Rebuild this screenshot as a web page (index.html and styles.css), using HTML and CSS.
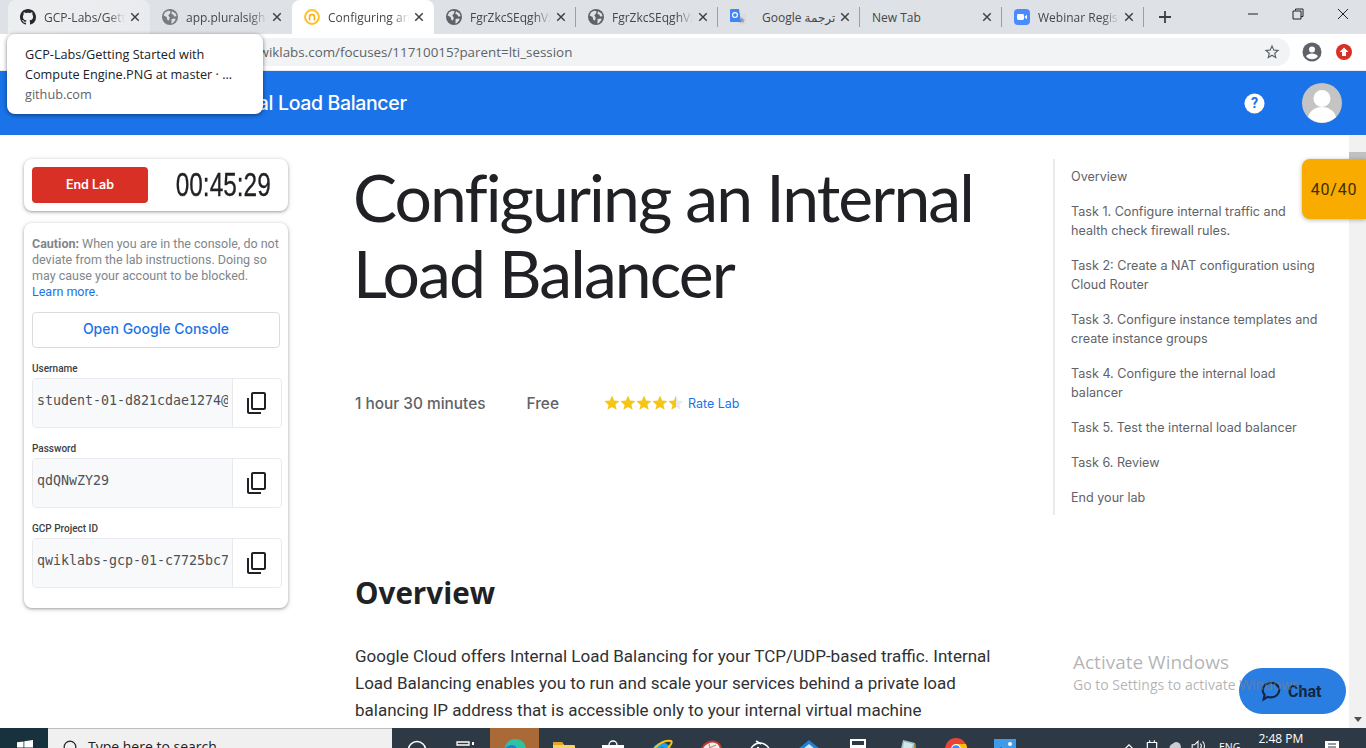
FILE: index.html
```html
<!DOCTYPE html>
<html lang="en">
<head>
<meta charset="utf-8">
<title>Configuring an Internal Load Balancer</title>
<link rel="stylesheet" href="styles.css">
</head>
<body>
<svg class="defs" width="0" height="0" aria-hidden="true">
  <defs>
    <symbol id="i-close" viewBox="0 0 12 12"><path d="M1.5 1.5l9 9M10.5 1.5l-9 9" fill="none" stroke="currentColor" stroke-width="1.7"/></symbol>
    <symbol id="i-globe" viewBox="0 0 16 16"><circle cx="8" cy="8" r="8" fill="#5f6368"/><path d="M3 3.500l3-1.800 2.600.6L8 4.400 6.200 6.600 7.800 8.600 7 11.400 5.400 11 4.600 8 1.600 6.600zM10 2.200l3.600 2.400 1 2.600-2.400.4-1-2-1.800-.6zM9.600 10l3.400-.6.6 1.400-2.600 3.200-1.600.4z" fill="#dee1e6"/></symbol>
    <symbol id="i-copy" viewBox="0 0 24 24"><path transform="matrix(1 0 0 -1 0 24)" d="M16 1H4c-1.100 0-2 .9-2 2v14h2V3h12V1zm3 4H8c-1.100 0-2 .9-2 2v14c0 1.100.9 2 2 2h11c1.100 0 2-.9 2-2V7c0-1.100-.9-2-2-2zm0 16H8V7h11v14z" fill="#202124"/></symbol>
    <symbol id="i-star" viewBox="0 0 24 24"><path d="M12 17.270L18.180 21l-1.640-7.030L22 9.240l-7.190-.61L12 2 9.190 8.630 2 9.240l5.460 5.730L5.820 21z"/></symbol>
    <linearGradient id="half-star"><stop offset="50%" stop-color="#f5c518"/><stop offset="50%" stop-color="#e8eaed"/></linearGradient>
  </defs>
</svg>

<div class="tabstrip">
  <div class="tab tab-hover">
    <svg class="favicon" viewBox="0 0 16 16"><path fill="#24292e" d="M8 0C3.58 0 0 3.58 0 8c0 3.54 2.29 6.53 5.47 7.59.4.07.55-.17.55-.38 0-.19-.01-.82-.01-1.49-2.01.37-2.53-.49-2.69-.94-.09-.23-.48-.94-.82-1.13-.28-.15-.68-.52-.01-.53.63-.01 1.08.58 1.23.82.72 1.21 1.87.87 2.33.66.07-.52.28-.87.51-1.07-1.78-.2-3.64-.89-3.64-3.95 0-.87.31-1.59.82-2.15-.08-.2-.36-1.02.08-2.12 0 0 .67-.21 2.2.82.64-.18 1.32-.27 2-.27.68 0 1.36.09 2 .27 1.53-1.04 2.2-.82 2.2-.82.44 1.1.16 1.92.08 2.12.51.56.82 1.27.82 2.15 0 3.07-1.87 3.75-3.65 3.95.29.25.54.73.54 1.48 0 1.07-.01 1.93-.01 2.2 0 .21.15.46.55.38A8.013 8.013 0 0016 8c0-4.42-3.58-8-8-8z"/></svg>
    <span class="tab-title">GCP-Labs/Getting Started</span>
    <svg class="tab-close"><use href="#i-close"/></svg>
  </div>
  <div class="tab">
    <svg class="favicon favicon-soft"><use href="#i-globe"/></svg>
    <span class="tab-title">app.pluralsight.com</span>
    <svg class="tab-close"><use href="#i-close"/></svg>
  </div>
  <div class="tab tab-active">
    <svg class="favicon" viewBox="0 0 16 16"><circle cx="8" cy="8" r="6.900" fill="none" stroke="#fbc02d" stroke-width="2"/><path d="M4.800 8a3.200 3.200 0 1 1 6.400 0v3.500H9.700V8a1.700 1.700 0 0 0-3.400 0v3.500H4.800z" fill="#f9ab00"/></svg>
    <span class="tab-title">Configuring an Internal</span>
    <svg class="tab-close"><use href="#i-close"/></svg>
  </div>
  <div class="tab tab-sep">
    <svg class="favicon"><use href="#i-globe"/></svg>
    <span class="tab-title">FgrZkcSEqghVxyz</span>
    <svg class="tab-close"><use href="#i-close"/></svg>
  </div>
  <div class="tab tab-sep">
    <svg class="favicon"><use href="#i-globe"/></svg>
    <span class="tab-title">FgrZkcSEqghVxyz</span>
    <svg class="tab-close"><use href="#i-close"/></svg>
  </div>
  <div class="tab tab-sep">
    <svg class="favicon" viewBox="0 0 16 16"><path d="M8 5h8v11H8z" fill="#dadce0"/><path d="M12 8l1 2.200 2 .2-1.500 1.500.4 2.100-1.900-1-1.900 1 .4-2.100L9 10.400l2-.2z" fill="#9aa0a6"/><path d="M1 0h8l2 13H1a1 1 0 0 1-1-1V1a1 1 0 0 1 1-1z" fill="#4285f4"/><circle cx="5" cy="6" r="2.400" fill="none" stroke="#fff" stroke-width="1.200"/></svg>
    <span class="tab-title tab-title-translate">Google ترجمة</span>
    <svg class="tab-close"><use href="#i-close"/></svg>
  </div>
  <div class="tab tab-sep">
    <span class="tab-title tab-title-plain">New Tab</span>
    <svg class="tab-close"><use href="#i-close"/></svg>
  </div>
  <div class="tab tab-sep">
    <svg class="favicon" viewBox="0 0 16 16"><rect width="16" height="16" rx="4" fill="#4a8cff"/><rect x="3" y="5" width="7" height="6" rx="1.400" fill="#fff"/><path d="M10.800 7.400L13 5.700v4.600l-2.200-1.700z" fill="#fff"/></svg>
    <span class="tab-title">Webinar Registration</span>
    <svg class="tab-close"><use href="#i-close"/></svg>
  </div>
  <svg class="newtab" viewBox="0 0 12 12"><path d="M6 0v12M0 6h12" fill="none" stroke="#3c4043" stroke-width="1.800"/></svg>
  <div class="winctrls">
    <svg class="winbtn" viewBox="0 0 12 12"><path d="M1 6h10" stroke="#202124" fill="none"/></svg>
    <svg class="winbtn" viewBox="0 0 12 12"><path d="M3.500 2.500V1h7.500v7.500H9M1 3h8v8H1z" stroke="#202124" fill="none"/></svg>
    <svg class="winbtn" viewBox="0 0 12 12"><path d="M1 1l10 10M11 1L1 11" stroke="#202124" fill="none"/></svg>
  </div>
</div>

<div class="toolbar">
  <div class="omnibox">
    <span class="url">https://www.qwiklabs.com/focuses/11710015?parent=lti_session</span>
    <svg class="omni-star" viewBox="0 0 24 24"><path d="M22 9.240l-7.190-.62L12 2 9.190 8.630 2 9.240l5.460 4.730L5.820 21 12 17.270 18.180 21l-1.630-7.030L22 9.240zM12 15.400l-3.760 2.270 1-4.280-3.320-2.880 4.380-.38L12 6.100l1.710 4.040 4.380.38-3.320 2.880 1 4.280L12 15.400z" fill="#5f6368"/></svg>
  </div>
  <svg class="tool-profile" viewBox="0 0 20 20"><circle cx="10" cy="10" r="9.500" fill="#5f6368"/><circle cx="10" cy="7.500" r="3" fill="#fff"/><path d="M4 14.300c1.200-2 3.600-2.800 6-2.800s4.800.8 6 2.800A7.500 7.500 0 0 1 4 14.300z" fill="#fff"/></svg>
  <svg class="tool-update" viewBox="0 0 16 16"><circle cx="8" cy="8" r="8" fill="#d93025"/><path d="M8 3.500L12.500 8H10v4H6V8H3.500z" fill="#fff"/></svg>
</div>

<header class="appbar">
  <div class="appbar-title">Configuring an Internal Load Balancer</div>
  <svg class="appbar-help" viewBox="0 0 22 22"><circle cx="11" cy="11" r="10.500" fill="#fff"/><text x="11" y="16" text-anchor="middle" class="help-mark">?</text></svg>
  <svg class="appbar-avatar" viewBox="0 0 40 40"><circle cx="20" cy="20" r="20" fill="#c4c4c4"/><circle cx="20" cy="15.500" r="8.500" fill="#fff"/><path d="M6 34c2-7 8-10 14-10s12 3 14 10a20 20 0 0 1-28 0z" fill="#fff"/></svg>
</header>

<div class="viewport">
  <div class="page">
    <main class="layout">
      <aside class="sidebar">
        <section class="card card-timer">
          <button class="end-lab">End Lab</button>
          <div class="timer-box"><span class="timer">00:45:29</span></div>
        </section>
        <section class="card card-creds">
          <p class="caution"><strong>Caution:</strong> When you are in the console, do not deviate from the lab instructions. Doing so may cause your account to be blocked. <a class="learn">Learn more.</a></p>
          <button class="open-console">Open Google Console</button>
          <div class="cred-label">Username</div>
          <div class="field"><div class="field-value"><div class="field-text">student-01-d821cdae1274@qwiklabs.net</div></div><div class="field-copy"><svg class="copy-icon"><use href="#i-copy"/></svg></div></div>
          <div class="cred-label">Password</div>
          <div class="field"><div class="field-value"><div class="field-text">qdQNwZY29</div></div><div class="field-copy"><svg class="copy-icon"><use href="#i-copy"/></svg></div></div>
          <div class="cred-label">GCP Project ID</div>
          <div class="field"><div class="field-value"><div class="field-text">qwiklabs-gcp-01-c7725bc7b4a1</div></div><div class="field-copy"><svg class="copy-icon"><use href="#i-copy"/></svg></div></div>
        </section>
      </aside>

      <article class="content">
        <h1 class="headline">Configuring an Internal Load Balancer</h1>
        <div class="meta">
          <span class="meta-item">1 hour 30 minutes</span>
          <span class="meta-item meta-free">Free</span>
          <span class="stars">
            <svg class="star"><use href="#i-star"/></svg>
            <svg class="star"><use href="#i-star"/></svg>
            <svg class="star"><use href="#i-star"/></svg>
            <svg class="star"><use href="#i-star"/></svg>
            <svg class="star star-half"><use href="#i-star"/></svg>
          </span>
          <a class="rate">Rate Lab</a>
        </div>
        <h2 class="section-title">Overview</h2>
        <p class="body-text">Google Cloud offers Internal Load Balancing for your TCP/UDP-based traffic. Internal Load Balancing enables you to run and scale your services behind a private load balancing IP address that is accessible only to your internal virtual machine instances.</p>
      </article>

      <nav class="toc">
        <a class="toc-item">Overview</a>
        <a class="toc-item">Task 1. Configure internal traffic and health check firewall rules.</a>
        <a class="toc-item">Task 2: Create a NAT configuration using Cloud Router</a>
        <a class="toc-item">Task 3. Configure instance templates and create instance groups</a>
        <a class="toc-item">Task 4. Configure the internal load balancer</a>
        <a class="toc-item">Task 5. Test the internal load balancer</a>
        <a class="toc-item">Task 6. Review</a>
        <a class="toc-item">End your lab</a>
      </nav>
    </main>
  </div>
  <div class="scrollbar">
    <div class="sb-arrow sb-up"></div>
    <div class="sb-thumb"></div>
    <div class="sb-track"></div>
    <div class="sb-arrow sb-down"></div>
  </div>
</div>

<div class="taskbar">
  <div class="start"><svg class="win-logo" viewBox="0 0 16 16"><path d="M0 2.300l6.500-.9v6.200H0zM7.300 1.300L16 0v7.600H7.300zM0 8.400h6.500v6.200L0 13.700zM7.300 8.400H16V16l-8.700-1.300z" fill="#fff"/></svg></div>
  <div class="searchbox">
    <svg class="search-ring" viewBox="0 0 14 14"><circle cx="7" cy="7" r="5.800" fill="none" stroke="#222" stroke-width="1.200"/></svg>
    <span class="search-text">Type here to search</span>
  </div>
  <div class="task-icons">
    <div class="task"><svg class="task-svg" viewBox="0 0 24 24"><circle cx="12" cy="12" r="8.500" fill="none" stroke="#fff" stroke-width="1.600"/></svg></div>
    <div class="task"><svg class="task-svg" viewBox="0 0 24 24"><path d="M3 4h12v3H3zM3 12h12v8H3z" fill="none" stroke="#fff" stroke-width="1.300"/><path d="M18 4h2v3h-2zM18 12h2v3h-2z" fill="#fff"/></svg></div>
    <div class="task task-open"><svg class="task-svg" viewBox="0 0 24 24"><path d="M1 14C1 6 6 1 12.500 1 19 1 23 6 23 11c0 3-2 4.500-5 4.500-2 0-3.500-.8-3.500-1.500C14 9 8 8 5 11c-2 2-2.500 5-1 8z" fill="#2fc2a2"/><path d="M1 14c0-4 4-7 8-7 3 0 5.500 2.500 5.500 6-1-2-3-3-5-2.500-4 1-5 5-4 9-2-1-4.500-2.500-4.500-5.500z" fill="#1e7fd6"/></svg></div>
    <div class="task"><svg class="task-svg" viewBox="0 0 24 24"><path d="M1 5a1 1 0 0 1 1-1h8l2 3h10a1 1 0 0 1 1 1v13H1z" fill="#f6d365"/><path d="M1 5a1 1 0 0 1 1-1h8l2 3H1z" fill="#e0a526"/></svg></div>
    <div class="task"><svg class="task-svg" viewBox="0 0 24 24"><path d="M8 7a4 4 0 0 1 8 0" fill="none" stroke="#fff" stroke-width="1.400"/><path d="M1 7h22v17H1z" fill="#fff"/><path d="M7 10h4.500v4.500H7z" fill="#f25022"/><path d="M12.500 10H17v4.500h-4.500z" fill="#7fba00"/></svg></div>
    <div class="task"><svg class="task-svg" viewBox="0 0 24 24"><circle cx="12" cy="14" r="9.500" fill="#1ea1e8"/><circle cx="12" cy="14" r="4.500" fill="#2d3a45"/><path d="M3 12C9 5 16 2 21 3c2 1-1 5-3 7" fill="none" stroke="#f5c518" stroke-width="2"/></svg></div>
    <div class="task"><svg class="task-svg" viewBox="0 0 24 24"><ellipse cx="12" cy="12" rx="11" ry="9" transform="rotate(-25 12 12)" fill="#c0392b"/><ellipse cx="12" cy="12" rx="9" ry="7" transform="rotate(-25 12 12)" fill="#f1f1f1"/><path d="M6 12l11-5M10 6l3 11" stroke="#c88" stroke-width="1.200"/></svg></div>
    <div class="task"><svg class="task-svg" viewBox="0 0 24 24"><path d="M2 14a10 10 0 0 1 20 0" fill="none" stroke="#fff" stroke-width="1.500" transform="translate(0 1)"/><path d="M8 3l5 3" stroke="#fff" stroke-width="1.500"/><circle cx="10" cy="10" r="1.200" fill="#fff"/><circle cx="15" cy="12" r="1.200" fill="#fff"/></svg></div>
    <div class="task"><svg class="task-svg" viewBox="0 0 24 24"><path d="M1 11L12 2l11 9v13H1z" fill="#1f7fd4"/><path d="M1 11l11 8 11-8v2L12 21 1 13z" fill="#fff"/><path d="M6 11l6-5 6 5-6 4z" fill="#cfe8fb"/></svg></div>
    <div class="task"><svg class="task-svg" viewBox="0 0 24 24"><path d="M4 1h16v23H4z" fill="#fff"/><path d="M6 3h12v4H6z" fill="#2d3a45"/><path d="M7 10h2v3H7zM11 10h2v3h-2zM15 10h2v3h-2z" fill="#2d3a45"/></svg></div>
    <div class="task"><svg class="task-svg" viewBox="0 0 24 24"><path d="M8 2l12 3-4 19H3z" fill="#9fc5c9"/><path d="M9 4l9 2-2 6-8-1z" fill="#d5e6e8"/><path d="M20 5l1 3-3 16h-2z" fill="#c28a2a"/></svg></div>
    <div class="task"><svg class="task-chrome" viewBox="0 0 24 24"><circle cx="12" cy="12" r="11" fill="#ea4335"/><path d="M12 12L2 18A11 11 0 0 0 12 23z" fill="#34a853"/><path d="M12 7h10a11 11 0 0 1-10 16z" fill="#fbbc05"/><circle cx="12" cy="12" r="5" fill="#fff"/><circle cx="12" cy="12" r="3.800" fill="#4285f4"/></svg></div>
    <div class="task"><svg class="task-svg" viewBox="0 0 24 24"><rect x="1" y="1" width="22" height="23" fill="#3d9be9"/><path d="M1 15l7-6 8 7v8H1z" fill="#0e5aa7"/><circle cx="17" cy="6" r="2" fill="#fff"/></svg></div>
  </div>
  <div class="tray">
    <svg class="tray-icon" viewBox="0 0 12 12"><path d="M2 9l4-4 4 4" fill="none" stroke="#fff"/></svg>
    <svg class="tray-icon" viewBox="0 0 12 12"><path d="M2 3h8v7H2zM4 1v2M8 1v2" fill="none" stroke="#fff"/></svg>
    <svg class="tray-icon" viewBox="0 0 12 12"><path d="M2 10a4 4 0 0 1 2-6 4 4 0 0 1 7 2v4z" fill="#c9cdd1"/></svg>
    <svg class="tray-icon" viewBox="0 0 12 12"><path d="M1 5h2l3-3v10L3 9H1zM8 4a3 3 0 0 1 0 4M10 2a6 6 0 0 1 0 8" fill="none" stroke="#fff" stroke-width=".9"/></svg>
    <span class="tray-lang">ENG</span>
    <span class="tray-clock">2:48 PM</span>
    <svg class="tray-note" viewBox="0 0 16 16"><path d="M1 1h14v11H1z" fill="#fff"/><path d="M4 4h8M4 7h8" stroke="#2d3a45"/></svg>
  </div>
</div>

<div class="tooltip">
  <div class="tooltip-title">GCP-Labs/Getting Started with<br>Compute Engine.PNG at master · ...</div>
  <div class="tooltip-host">github.com</div>
</div>

<div class="score">40/40</div>

<div class="chat">
  <svg class="chat-icon" viewBox="0 0 24 24"><path d="M12 3c5 0 9 3.500 9 8s-4 8-9 8c-1.300 0-2.500-.2-3.600-.6L4 21l1-4.600C3.700 15 3 13 3 11c0-4.500 4-8 9-8z" fill="none" stroke="#14263f" stroke-width="2.300"/></svg>
  <span class="chat-label">Chat</span>
</div>

<div class="activate">
  <div class="activate-title">Activate Windows</div>
  <div class="activate-sub">Go to Settings to activate Windows.</div>
</div>
</body>
</html>
```

FILE: styles.css
```css
* { box-sizing: border-box; }
html, body { margin: 0; height: 100%; }
body {
  position: relative;
  width: 1366px;
  height: 748px;
  overflow: hidden;
  display: flex;
  flex-direction: column;
  background: #fff;
  font-family: Roboto, "Liberation Sans", sans-serif;
  color: #202124;
}
.defs { position: absolute; }

/* browser chrome */
.tabstrip {
  height: 34px;
  flex: none;
  display: flex;
  align-items: center;
  padding-left: 8px;
  background: #dee1e6;
}
.tab {
  width: 142px;
  height: 34px;
  flex: none;
  display: flex;
  align-items: center;
  padding-left: 12px;
  padding-right: 10px;
  position: relative;
  font: 12px "Open Sans", "Noto Sans", sans-serif;
  color: #45474a;
}
.tab-hover { background: linear-gradient(90deg, #eceef0, #e9ebee); border-radius: 8px 8px 0 0; }
.tab-active { background: #fff; border-radius: 8px 8px 0 0; }
.tab-sep::after {
  content: "";
  position: absolute;
  right: 0;
  top: 7px;
  height: 20px;
  width: 1px;
  background: #9aa0a6;
}
.favicon { width: 16px; height: 16px; flex: none; margin-right: 8px; }
.favicon-soft { opacity: .8; }
.tab-title {
  flex: 1;
  min-width: 0;
  overflow: hidden;
  white-space: nowrap;
  -webkit-mask-image: linear-gradient(90deg, #000 80%, transparent 100%);
  mask-image: linear-gradient(90deg, #000 80%, transparent 100%);
}
.tab-title-translate { padding-left: 8px; font-family: "Open Sans", "Noto Sans", "DejaVu Sans", sans-serif; -webkit-mask-image: none; mask-image: none; }
.tab-title-plain { -webkit-mask-image: none; mask-image: none; }
.tab-close { width: 10px; height: 10px; flex: none; margin-left: 5px; color: #3c4043; }
.newtab { width: 12px; height: 12px; margin-left: 15px; flex: none; }
.winctrls { margin-left: auto; display: flex; align-items: center; align-self: flex-start; padding-top: 8px; padding-right: 17px; gap: 33px; }
.winbtn { width: 12px; height: 12px; display: block; }

.toolbar {
  height: 37px;
  flex: none;
  display: flex;
  align-items: center;
  padding-bottom: 1px;
  background: #fff;
  border-bottom: 1px solid #e8eaed;
}
.omnibox {
  margin-left: 110px;
  width: 1180px;
  height: 28px;
  display: flex;
  align-items: center;
  padding-right: 9px;
  background: #f1f3f4;
  border-radius: 14px;
}
.url { flex: 1; padding-left: 60px; font: 13.400px "Open Sans", "Noto Sans", sans-serif; color: #5f6368; white-space: nowrap; }
.omni-star { width: 18px; height: 18px; }
.tool-profile { width: 20px; height: 20px; margin-left: 12px; }
.tool-update { width: 16px; height: 16px; margin-left: 14px; }

.appbar {
  height: 64px;
  flex: none;
  display: flex;
  align-items: center;
  background: #1a73e8;
  padding-right: 24px;
}
.appbar-title {
  padding-left: 67px;
  font: 500 19.500px Inter, Roboto, sans-serif;
  letter-spacing: -.35px;
  color: #fff;
  white-space: nowrap;
}
.appbar-help { width: 21px; height: 21px; margin-left: auto; }
.help-mark { font: 700 15px Roboto, sans-serif; fill: #1a73e8; }
.appbar-avatar { width: 40px; height: 40px; margin-left: 37px; }

/* viewport */
.viewport { flex: 1; min-height: 0; display: flex; }
.page { flex: 1; min-width: 0; overflow: hidden; }
.scrollbar {
  width: 17px;
  flex: none;
  display: flex;
  flex-direction: column;
  align-items: center;
  background: #f1f1f1;
}
.sb-arrow { height: 17px; flex: none; width: 100%; position: relative; }
.sb-down::after {
  content: "";
  position: absolute;
  left: 5px;
  top: 6px;
  border-left: 4px solid transparent;
  border-right: 4px solid transparent;
  border-top: 5px solid #505050;
}
.sb-thumb { width: 100%; height: 66px; background: #c1c1c1; flex: none; }
.sb-track { flex: 1; }

.layout { display: flex; align-items: flex-start; padding-top: 24px; }

/* sidebar */
.sidebar { width: 264px; flex: none; margin-left: 24px; }
.card { background: #fff; border-radius: 8px; box-shadow: 0 1px 3px rgba(60,64,67,.45), 0 1px 6px rgba(60,64,67,.12); }
.card-timer { height: 52px; padding: 8px; display: flex; align-items: center; margin-bottom: 12px; }
.end-lab {
  width: 116px;
  height: 36px;
  flex: none;
  border: 0;
  border-radius: 4px;
  padding: 0 0 2px;
  background: #d93025;
  color: #fff;
  font: 600 12.500px Inter, Roboto, sans-serif;
}
.timer-box { flex: 1; text-align: center; padding-left: 11px; white-space: nowrap; }
.timer {
  display: inline-block;
  font: 400 33px "Liberation Sans", sans-serif;
  line-height: 36px;
  transform: scaleX(.74);
  color: #202124;
  -webkit-text-stroke: .3px #202124;
}
.card-creds { height: 385px; padding: 13px 8px 0; }
.caution { margin: 0; font-size: 12.500px; line-height: 16px; color: #80868b; }
.caution strong { font-weight: 700; }
.learn { color: #1a73e8; display: block; }
.open-console {
  display: block;
  width: 248px;
  height: 36px;
  margin-top: 12px;
  padding: 0 0 3px;
  background: #fff;
  border: 1px solid #dadce0;
  border-radius: 4px;
  color: #1a73e8;
  font: 500 14px Inter, Roboto, sans-serif;
}
.cred-label { margin-top: 14px; height: 16px; font-size: 10px; line-height: 14px; font-weight: 500; color: #3c4043; }
.field {
  width: 250px;
  height: 50px;
  display: flex;
  border: 1px solid #e8eaed;
  border-radius: 4px;
  overflow: hidden;
}
.field-value {
  width: 200px;
  flex: none;
  padding: 14px 0 0 4px;
  background: #f8f9fa;
  border-right: 1px solid #e8eaed;
}
.field-text {
  width: 191px;
  font: 13.300px/16px "DejaVu Sans Mono", "Liberation Mono", monospace;
  color: #4d5156;
  white-space: nowrap;
  overflow: hidden;
}
.field-copy { flex: 1; display: flex; align-items: center; justify-content: center; }
.copy-icon { width: 24px; height: 24px; }

/* article */
.content { width: 640px; flex: none; margin-left: 67px; }
.headline {
  margin: 0 0 0 -2px;
  font: 400 66px/76px Lato, "Open Sans", sans-serif;
  letter-spacing: -1.900px;
  color: #202124;
}
.meta { display: flex; align-items: center; height: 24px; margin-top: 80px; color: #5f6368; }
.meta-item { font: 500 15.400px Inter, Roboto, sans-serif; }
.meta-free { margin-left: 41px; }
.stars { display: flex; margin-left: 44px; }
.star { width: 18px; height: 18px; margin-right: -2px; fill: #f5c518; display: block; }
.star-half { fill: url(#half-star); }
.rate { margin-left: 5px; font: 400 12.500px Inter, Roboto, sans-serif; color: #1a73e8; }
.section-title { margin: 160px 0 0; font: 700 29.600px/36px "Open Sans", "Noto Sans", sans-serif; color: #202124; }
.body-text { margin: 32px 0 0; font-size: 17px; line-height: 27px; color: #303134; }

/* toc */
.toc {
  width: 268px;
  flex: none;
  margin-left: 58px;
  border-left: 2px solid #e8eaed;
  padding: 8px 0 8px 16px;
  display: flex;
  flex-direction: column;
  gap: 16px;
}
.toc-item { font: 400 12.600px/19px Inter, "Open Sans", sans-serif; color: #5f6368; }

/* overlays */
.tooltip {
  position: absolute;
  left: 7px;
  top: 34px;
  width: 256px;
  height: 80px;
  padding: 10px 18px 0;
  background: #fff;
  border-radius: 8px;
  box-shadow: 0 1px 4px rgba(0,0,0,.5);
  font: 12.700px/20px "Open Sans", "Noto Sans", sans-serif;
  color: #202124;
}
.tooltip-host { color: #5f6368; }
.score {
  position: absolute;
  right: 0;
  top: 159px;
  width: 64px;
  height: 60px;
  display: flex;
  align-items: center;
  justify-content: center;
  background: #f9ab00;
  border-radius: 8px 0 0 8px;
  box-shadow: 0 1px 4px rgba(60,64,67,.4);
  font-size: 16px;
  letter-spacing: .8px;
  color: #3c3000;
}
.chat {
  position: absolute;
  left: 1239px;
  top: 668px;
  width: 107px;
  height: 46px;
  display: flex;
  align-items: center;
  padding-left: 21px;
  gap: 6px;
  background: #2a7de1;
  border-radius: 23px;
}
.chat-icon { width: 22px; height: 22px; }
.chat-label { font-size: 16px; font-weight: 700; color: #14263f; }
.activate {
  position: absolute;
  left: 1073px;
  top: 649px;
  color: rgba(130,130,130,.6);
  font-family: "Open Sans", "Noto Sans", sans-serif;
  pointer-events: none;
}
.activate-title { font-size: 19px; line-height: 26px; }
.activate-sub { font-size: 14px; line-height: 20px; }

/* taskbar */
.taskbar {
  height: 20px;
  flex: none;
  display: flex;
  overflow: hidden;
  background: #2d3a45;
}
.start { width: 48px; flex: none; background: #17323c; padding: 12px 0 0 17px; }
.win-logo { width: 16px; height: 16px; display: block; }
.searchbox {
  width: 344px;
  flex: none;
  display: flex;
  align-items: flex-start;
  padding: 8px 0 0 15px;
  background: #f0f0f0;
  border-top: 1px solid #bdbdbd;
}
.search-ring { width: 14px; height: 14px; flex: none; margin-top: 3px; }
.search-text { margin-left: 11px; font: 14px/19px "Open Sans", "Noto Sans", sans-serif; color: #222; white-space: nowrap; }
.task-icons { display: flex; flex: none; }
.task { width: 49px; display: flex; justify-content: center; padding-top: 10px; }
.task-open { background: #a96a37; }
.task-svg { width: 24px; height: 24px; flex: none; }
.task-chrome { width: 24px; height: 24px; flex: none; margin-top: -1px; }
.tray { flex: 1; display: flex; align-items: flex-start; padding-left: 84px; }
.tray-icon { width: 14px; height: 14px; flex: none; margin: 11px 0 0 9px; }
.tray-lang { margin: 12px 0 0 14px; font: 10.500px/14px "Open Sans", sans-serif; color: #fff; }
.tray-clock { margin: 3px 0 0 18px; font: 12px/16px "Open Sans", sans-serif; color: #fff; white-space: nowrap; }
.tray-note { width: 16px; height: 16px; flex: none; margin: 12px 0 0 21px; }
```
